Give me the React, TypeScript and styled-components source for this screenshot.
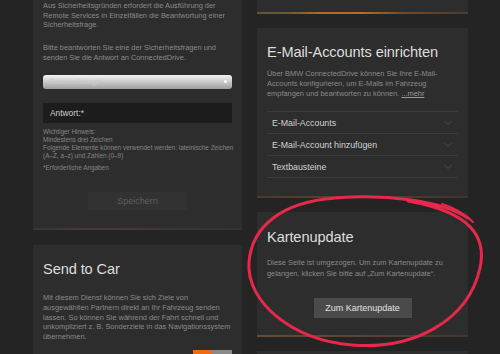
import React from "react";
import styled, { createGlobalStyle } from "styled-components";
import { ChevronDown } from "lucide-react";

const Global = createGlobalStyle`
  html, body { margin: 0; padding: 0; background: #242424; }
  body { font-family: "Liberation Sans", Arial, sans-serif; overflow: hidden; }
  * { box-sizing: border-box; }
`;

const Page = styled.div`
  position: relative;
  width: 500px;
  height: 354px;
  overflow: hidden;
  display: flex;
  align-items: flex-start;
  gap: 15px;
  padding-left: 33px;
  background: #242424;
`;

const Column = styled.div<{ $w: number; $gap: number }>`
  width: ${(p) => p.$w}px;
  display: flex;
  flex-direction: column;
  gap: ${(p) => p.$gap}px;
`;

const Card = styled.section<{ $pt: number; $pb: number; $h?: number }>`
  position: relative;
  background: #2d2d2d;
  padding: ${(p) => p.$pt}px 10px ${(p) => p.$pb}px;
  display: flex;
  flex-direction: column;
  ${(p) => (p.$h !== undefined ? `height: ${p.$h}px;` : "")}
`;

const Rule = styled.div<{ $bg: string }>`
  position: absolute;
  left: 0;
  right: 0;
  bottom: 0;
  height: 2px;
  background: ${(p) => p.$bg};
`;

const Title = styled.h2<{ $mt?: number }>`
  margin: ${(p) => p.$mt ?? 0}px 0 0;
  font-size: 14.6px;
  line-height: 18px;
  font-weight: 400;
  color: #dedede;
  letter-spacing: -0.1px;
`;

const Para = styled.p<{ $mt?: number; $lh?: number }>`
  margin: ${(p) => p.$mt ?? 0}px 0 0;
  font-size: 7.4px;
  line-height: ${(p) => p.$lh ?? 9.7}px;
  color: #8a8a8a;
  white-space: nowrap;
`;

const More = styled.span`
  text-decoration: underline;
  color: #9a9a9a;
`;

const Note = styled.div<{ $mt?: number }>`
  margin-top: ${(p) => p.$mt ?? 0}px;
  font-size: 6.4px;
  line-height: 8px;
  color: #858585;
  white-space: nowrap;
`;

const Select = styled.div`
  margin-top: 12px;
  height: 15px;
  border-radius: 3px;
  background: linear-gradient(#f4f4f4 0%, #dadada 30%, #b8b8b8 70%, #9e9e9e 100%);
  display: flex;
  align-items: center;
  justify-content: space-between;
  padding: 0 5px 0 6px;
  font-size: 7px;
  color: #c9c9c9;
`;

const Dot = styled.span`
  width: 3px;
  height: 3px;
  border-radius: 50%;
  background: #fff;
`;

const Input = styled.div`
  margin-top: 14px;
  height: 20px;
  background: #1c1c1c;
  display: flex;
  align-items: center;
  padding-left: 7px;
  font-size: 8.4px;
  color: #cfcfcf;
`;

const Button = styled.div<{ $mt: number; $w: number; $h: number; $bg: string; $fg: string }>`
  margin-top: ${(p) => p.$mt}px;
  align-self: center;
  width: ${(p) => p.$w}px;
  height: ${(p) => p.$h}px;
  background: ${(p) => p.$bg};
  color: ${(p) => p.$fg};
  font-size: 9px;
  display: flex;
  align-items: center;
  justify-content: center;
`;

const Toggle = styled.div`
  margin-top: 8px;
  align-self: flex-end;
  display: flex;
  height: 12px;
`;

const ToggleHalf = styled.span<{ $bg: string; $w: number }>`
  width: ${(p) => p.$w}px;
  background: ${(p) => p.$bg};
`;

const List = styled.ul`
  list-style: none;
  margin: 12px 0 0;
  padding: 0;
  border-top: 1px solid #3b3b3b;
`;

const Row = styled.li`
  height: 22px;
  border-bottom: 1px solid #3b3b3b;
  display: flex;
  align-items: center;
  justify-content: space-between;
  padding: 0 4px 0 5px;
  font-size: 8.8px;
  color: #d2d2d2;
`;

const Overlay = styled.svg`
  position: absolute;
  left: 0;
  top: 0;
  pointer-events: none;
`;

const rows = ["E-Mail-Accounts", "E-Mail-Account hinzufügen", "Textbausteine"];

export default function App() {
  return (
    <>
      <Global />
      <Page>
        <Column $w={209} $gap={15}>
          <Card $pt={1} $pb={20} $h={230}>
            <Para>
              Aus Sicherheitsgründen erfordert die Ausführung der
              <br />
              Remote Services in Einzelfällen die Beantwortung einer
              <br />
              Sicherheitsfrage.
            </Para>
            <Para $mt={13}>
              Bitte beantworten Sie eine der Sicherheitsfragen und
              <br />
              senden Sie die Antwort an ConnectedDrive.
            </Para>
            <Select>
              <span>Sicherheitsfrage*</span>
              <Dot />
            </Select>
            <Input>Antwort:*</Input>
            <Note $mt={5}>
              Wichtiger Hinweis:
              <br />
              Mindestens drei Zeichen
              <br />
              Folgende Elemente können verwendet werden: lateinische Zeichen
              <br />
              (A–Z, a–z) und Zahlen (0–9)
            </Note>
            <Note $mt={4}>*Erforderliche Angaben</Note>
            <Button $mt={20} $w={99} $h={18} $bg="#323232" $fg="#5e5e5e">
              Speichern
            </Button>
            <Rule $bg="linear-gradient(90deg, #3a3431, #4a3b35 30%, #3d3532 70%, #353232)" />
          </Card>
          <Card $pt={15} $pb={0}>
            <Title>Send to Car</Title>
            <Para $mt={15} $lh={9.8}>
              Mit diesem Dienst können Sie sich Ziele von
              <br />
              ausgewählten Partnern direkt an Ihr Fahrzeug senden
              <br />
              lassen. So können Sie während der Fahrt schnell und
              <br />
              unkompliziert z. B. Sonderziele in das Navigationssystem
              <br />
              übernehmen.
            </Para>
            <Toggle>
              <ToggleHalf $bg="#f06a12" $w={19} />
              <ToggleHalf $bg="#8a8a8a" $w={20} />
            </Toggle>
          </Card>
        </Column>

        <Column $w={211} $gap={14}>
          <Card $pt={0} $pb={0} $h={14}>
            <Rule $bg="linear-gradient(90deg, #5b5440 0%, #6e5a3a 15%, #b8661e 30%, #c06a1c 50%, #6e4a2e 70%, #4a3a32 100%)" />
          </Card>
          <Card $pt={15} $pb={18} $h={170}>
            <Title>E-Mail-Accounts einrichten</Title>
            <Para $mt={8} $lh={10}>
              Über BMW ConnectedDrive können Sie Ihre E-Mail-
              <br />
              Accounts konfigurieren, um E-Mails im Fahrzeug
              <br />
              empfangen und beantworten zu können. <More>...mehr</More>
            </Para>
            <List>
              {rows.map((r) => (
                <Row key={r}>
                  <span>{r}</span>
                  <ChevronDown size={12} strokeWidth={1.4} color="#5c5c5c" />
                </Row>
              ))}
            </List>
            <Rule $bg="linear-gradient(90deg, #4d3a2e, #5a4030 40%, #3e3530 100%)" />
          </Card>
          <Card $pt={16} $pb={17} $h={125}>
            <Title>Kartenupdate</Title>
            <Para $mt={12} $lh={10.5}>
              Diese Seite ist umgezogen. Um zum Kartenupdate zu
              <br />
              gelangen, klicken Sie bitte auf „Zum Kartenupdate“.
            </Para>
            <Button $mt={19} $w={98} $h={20} $bg="#4a4a4a" $fg="#e2e2e2">
              Zum Kartenupdate
            </Button>
            <Rule $bg="linear-gradient(90deg, #6a4a30, #5c4432 50%, #40362f 100%)" />
          </Card>
          <Card $pt={0} $pb={0} $h={20} />
        </Column>

        <Overlay width="500" height="354" viewBox="0 0 500 354">
          <path
            d="M 468 218 C 440 200, 385 194, 335 198 C 282 202, 252 226, 249 262 C 246 302, 292 340, 352 345 C 412 350, 468 322, 480 268 C 487 236, 470 212, 408 201"
            fill="none"
            stroke="#e8284a"
            strokeWidth="3"
            strokeLinecap="round"
          />
          <path d="M 442 204 C 455 208, 465 214, 473 222" fill="none" stroke="#e8284a" strokeWidth="2" strokeLinecap="round" />
        </Overlay>
      </Page>
    </>
  );
}
